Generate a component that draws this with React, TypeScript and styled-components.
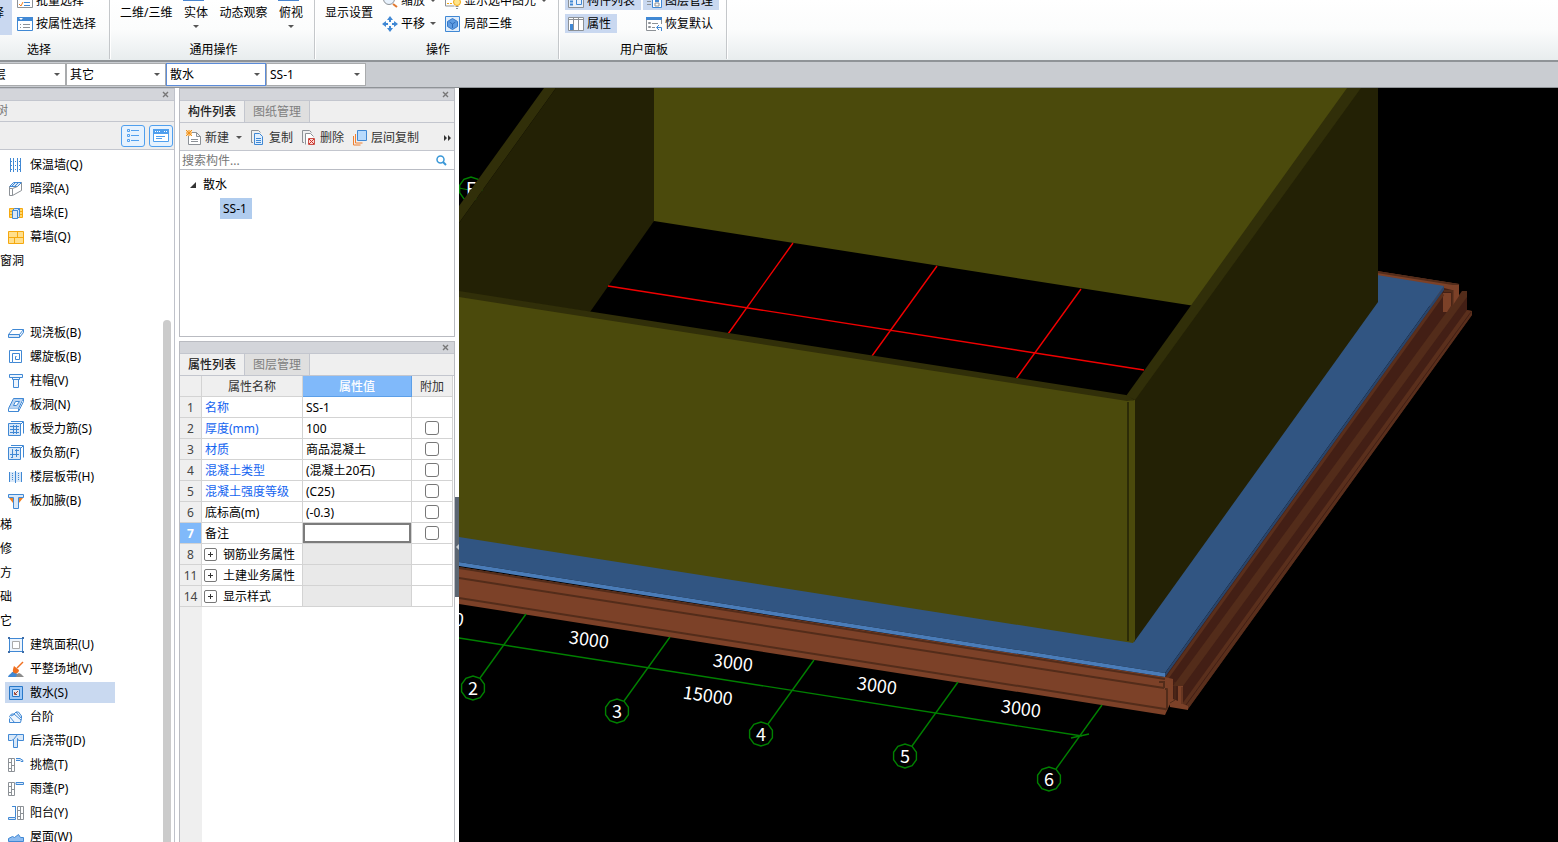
import React from "react";
import styled, { createGlobalStyle, css } from "styled-components";

const GlobalStyle = createGlobalStyle`
  *, *::before, *::after { box-sizing: border-box; }
  html, body, #root { height: 100%; }
  body {
    margin: 0;
    overflow: hidden;
    font-family: "Noto Sans", "Noto Sans CJK SC", sans-serif;
    font-size: 12px;
    line-height: 18px;
    color: #000;
    background: #fff;
  }
  button, select, input {
    font: inherit;
    color: inherit;
    margin: 0;
    padding: 0;
    border: 0;
    border-radius: 0;
    background: none;
  }
`;

/* ---------- frame ---------- */

const Shell = styled.div`
  display: flex;
  flex-direction: column;
  height: 100vh;
  overflow: hidden;
`;

const Ribbon = styled.header`
  display: flex;
  flex: none;
  height: 62px;
  padding-bottom: 1px;
  overflow: hidden;
  background: linear-gradient(#ffffff, #fbfcfc 50%, #e8edee);
  border-bottom: 2px solid #8f9397;
`;

const RibbonGroup = styled.section<{ $width: number; $bleed?: number }>`
  display: flex;
  flex: none;
  flex-direction: column;
  justify-content: space-between;
  width: ${(p) => p.$width}px;
  margin-top: -9px;
  margin-left: ${(p) => -(p.$bleed ?? 0)}px;
  border-right: 1px solid #c4c7ca;
  box-shadow: 1px 0 0 #fff;
`;

const RibbonBody = styled.div<{ $pad: number; $gap: number }>`
  display: flex;
  gap: ${(p) => p.$gap}px;
  padding-left: ${(p) => p.$pad}px;
`;

const RibbonLabel = styled.h2`
  margin: 0;
  padding-left: 3px;
  font-size: 12px;
  font-weight: 400;
  line-height: 18px;
  text-align: center;
`;

const RibbonColumn = styled.div`
  display: flex;
  flex-direction: column;
  align-items: flex-start;
  gap: 4px;
`;

const SmallButton = styled.button<{ $on?: boolean; $menu?: boolean }>`
  display: flex;
  align-items: center;
  gap: 3px;
  height: 19px;
  padding: 0 ${(p) => (p.$menu ? 0 : 6)}px 0 3px;
  white-space: nowrap;
  background: ${(p) => (p.$on ? "#c9d8f0" : "transparent")};
`;

const LargeButton = styled.button<{ $on?: boolean; $end?: boolean }>`
  display: flex;
  flex-direction: column;
  align-items: ${(p) => (p.$end ? "flex-end" : "center")};
  height: 44px;
  padding: 0 ${(p) => (p.$end ? 8 : 0)}px;
  width: ${(p) => (p.$end ? "40px" : "auto")};
  line-height: 24px;
  white-space: nowrap;
  background: ${(p) => (p.$on ? "#c9d8f0" : "transparent")};
`;

const IconCap = styled.span<{ $blue?: boolean }>`
  width: 21px;
  height: 10px;
  margin-right: 4px;
  border-bottom: 1px solid ${(p) => (p.$blue ? "#4a86d0" : "transparent")};
`;

const Arrow = styled.i<{ $space?: number }>`
  flex: none;
  width: 0;
  height: 0;
  margin-left: ${(p) => p.$space ?? 0}px;
  border: 3px solid transparent;
  border-top-color: #555;
  border-bottom: 0;
`;

const FilterBar = styled.nav`
  display: flex;
  flex: none;
  height: 26px;
  padding: 1px 0;
  overflow: hidden;
  background: #c9ccd1;
  border-bottom: 1px solid #8f9397;
`;

const Combo = styled.label<{ $width: number; $bleed?: number; $focus?: boolean }>`
  display: flex;
  flex: none;
  align-items: center;
  width: ${(p) => p.$width}px;
  margin-left: ${(p) => -(p.$bleed ?? 0)}px;
  padding-right: 5px;
  background: #fff;
  border: 1px solid ${(p) => (p.$focus ? "#5b8bd8" : "#a9abad")};

  select {
    flex: 1;
    min-width: 0;
    padding-left: 3px;
    appearance: none;
    outline: 0;
  }
`;

const Workspace = styled.main`
  display: flex;
  flex: 1;
  min-height: 0;
`;

/* ---------- panels ---------- */

const PanelTitle = styled.div`
  display: flex;
  flex: none;
  align-items: center;
  justify-content: flex-end;
  height: 12px;
  padding-right: 4px;
  background: #d3d5da;
  border-bottom: 1px solid #c3c6ce;
`;

const CloseButton = styled.button`
  display: flex;
  width: 9px;
  height: 9px;
`;

const TreePanel = styled.aside`
  display: flex;
  flex: none;
  flex-direction: column;
  width: 175px;
  margin-right: 4px;
  background: #fff;
  border: solid #bfc2ca;
  border-width: 1px 1px 0 0;
`;

const TreeHeading = styled.h2`
  flex: none;
  height: 21px;
  margin: 0 0 0 -4px;
  font-size: 12px;
  font-weight: 400;
  line-height: 20px;
  color: #777;
  background: #eee;
  border-bottom: 1px solid #c3c6ce;
`;

const TreeTools = styled.div`
  display: flex;
  flex: none;
  justify-content: flex-end;
  gap: 4px;
  height: 28px;
  padding: 3px 1px 2px;
  background: #eee;
  border-bottom: 1px solid #c3c6ce;
`;

const ViewButton = styled.button`
  display: flex;
  align-items: center;
  justify-content: center;
  width: 24px;
  height: 22px;
  background: #e6f2fe;
  border: 1px solid #4f9fee;
  border-radius: 3px;
`;

const TreeBody = styled.div`
  display: flex;
  flex: 1;
  min-height: 0;
  overflow: hidden;
`;

const TreeList = styled.ul`
  flex: 1;
  margin: 0;
  padding: 2px 0 0;
  list-style: none;
`;

const TreeGap = styled.li`
  height: 48px;
`;

const TreeGroup = styled.li`
  height: 24px;
  line-height: 25px;
`;

const TreeItem = styled.li`
  height: 24px;
  padding: 2px 0 1px 5px;
`;

const TreeLabel = styled.div<{ $on?: boolean }>`
  display: flex;
  align-items: center;
  gap: 6px;
  width: 110px;
  height: 21px;
  padding-left: 3px;
  white-space: nowrap;
  ${(p) => p.$on && css`background: #c9d9f0;`}
`;

const ScrollTrack = styled.div`
  flex: none;
  width: 11px;
  padding: 170px 3px 0 0;
`;

const ScrollThumb = styled.div`
  height: 100%;
  background: #cbcbcb;
  border-radius: 4px 4px 0 0;
`;

const SideColumn = styled.div`
  display: flex;
  flex: none;
  flex-direction: column;
  gap: 4px;
  width: 276px;
`;

const Panel = styled.section<{ $grow?: boolean }>`
  display: flex;
  flex: ${(p) => (p.$grow ? "1" : "none")};
  flex-direction: column;
  min-height: 0;
  background: #fff;
  border: 1px solid #b9bbc1;
  border-bottom-width: ${(p) => (p.$grow ? 0 : 1)}px;
`;

const Tabs = styled.div`
  display: flex;
  flex: none;
  height: 22px;
  background: #efefef;
  border-bottom: 1px solid #c3c6ce;
`;

const Tab = styled.button<{ $on?: boolean }>`
  width: 65px;
  color: ${(p) => (p.$on ? "#222" : "#808080")};
  font-weight: ${(p) => (p.$on ? 500 : 400)};
  background: ${(p) => (p.$on ? "#efefef" : "#dfdfdf")};
  border-right: 1px solid #c3c6ce;
`;

const Toolbar = styled.div`
  display: flex;
  flex: none;
  align-items: center;
  gap: 8px;
  height: 28px;
  padding: 2px 2px 0 6px;
  color: #333;
  background: #efefef;
  border-bottom: 1px solid #c3c6ce;
`;

const ToolButton = styled.button`
  display: flex;
  align-items: center;
  gap: 3px;
  white-space: nowrap;

  &:last-child { margin-left: auto; }
`;

const SearchRow = styled.label`
  display: flex;
  flex: none;
  align-items: center;
  height: 19px;
  padding: 1px 7px 0 2px;
  border-bottom: 1px solid #b9bcc4;

  input { flex: 1; min-width: 0; outline: 0; }
  input::placeholder { color: #777; opacity: 1; }
`;

const ComponentTree = styled.ul`
  height: 166px;
  margin: 0;
  padding: 3px 0 0 8px;
  line-height: 24px;
  list-style: none;

  ul { margin: 0; padding: 0 0 0 32px; list-style: none; }
`;

const Branch = styled.div`
  display: flex;
  align-items: center;
  gap: 5px;
`;

const Leaf = styled.span`
  display: inline-block;
  padding: 0 5px 0 3px;
  line-height: 21px;
  background: #b0ccee;
`;

/* ---------- property table ---------- */

const TableArea = styled.div`
  flex: 1;
  min-height: 0;
  overflow: hidden;
  background: linear-gradient(90deg, #efefef 22px, #fff 22px);
`;

const PropertyTable = styled.table`
  width: 273px;
  table-layout: fixed;
  border-collapse: separate;
  border-spacing: 0;

  th, td {
    height: 21px;
    padding: 1px 3px 0;
    overflow: hidden;
    line-height: 18px;
    font-weight: 400;
    text-align: left;
    white-space: nowrap;
    background: #fff;
    border: solid #d3d3d3;
    border-width: 0 1px 1px 0;
  }
`;

const ColumnHead = styled.th<{ $on?: boolean }>`
  && {
    text-align: center;
    color: ${(p) => (p.$on ? "#fff" : "#333")};
    font-weight: ${(p) => (p.$on ? 500 : 400)};
    background: ${(p) => (p.$on ? "#80b9fa" : "#efefef")};
    ${(p) => p.$on && css`border-color: #5c9fe8;`}
  }
`;

const RowHead = styled.th<{ $on?: boolean }>`
  && {
    padding: 1px 0 0;
    text-align: center;
    color: ${(p) => (p.$on ? "#fff" : "#444")};
    font-weight: ${(p) => (p.$on ? 700 : 400)};
    background: ${(p) => (p.$on ? "#80b9fa" : "#efefef")};
  }
`;

const NameCell = styled.td<{ $link?: boolean }>`
  color: ${(p) => (p.$link ? "#1464f0" : "#000")};
`;

const GroupName = styled.span`
  display: flex;
  align-items: center;
  gap: 6px;
`;

const Expander = styled.button`
  display: flex;
  align-items: center;
  justify-content: center;
  width: 13px;
  height: 13px;
  margin-left: -1px;
  border: 1px solid #777;
  border-radius: 2px;
`;

const ValueCell = styled.td<{ $state?: "muted" | "editing" }>`
  && {
    ${(p) => p.$state === "muted" && css`background: #e9e9e9;`}
    ${(p) => p.$state === "editing" && css`padding: 0;`}
  }
`;

const ValueInput = styled.input`
  display: block;
  width: 100%;
  height: 20px;
  outline: 2px solid #7c7c7c;
  outline-offset: -2px;
`;

const CheckCell = styled.td`
  && { padding: 0; text-align: center; }

  input {
    display: block;
    width: 14px;
    height: 14px;
    margin: 0 auto;
    appearance: none;
    border: 1px solid #777;
    border-radius: 3px;
  }
`;

/* ---------- viewport ---------- */

const Splitter = styled.div`
  display: flex;
  flex: none;
  flex-direction: column;
  align-items: center;
  width: 4px;
  padding-top: 409px;
  background: #fff;
`;

const SplitHandle = styled.button`
  display: flex;
  align-items: center;
  width: 4px;
  height: 100px;
  background: #5c6672;
`;

const Viewport = styled.div`
  flex: 1;
  min-width: 0;
  background: #000;

  svg { display: block; width: 100%; height: 100%; }
  text {
    font-family: "Noto Sans CJK SC", "Noto Sans", sans-serif;
    font-size: 18px;
    fill: #fff;
    text-anchor: middle;
  }
`;

/* ---------- icons ---------- */

const B = "#4088d4";
const G = "#8c9196";
const L = "#d9e8f8";
const Y = "#f5a80f";

const glyphs: Record<string, React.ReactNode> = {
  insulation: <><path d="M2.5 1v14M5.5 1v14M9.5 1v14M12.5 1v14" stroke={B} /><path d="M3 4.5h10M3 8.5h10M3 12.5h10" stroke={B} strokeDasharray="1 1" /></>,
  beam: <><path d="M1.500 5.500l4-4h8l-4 4z" fill={L} stroke={B} /><path d="M3.500 5.500l4-4M6.500 5.500l4-4" stroke={B} /><path d="M1.500 5.500v9h3v-7h-3M4.500 14.500l9-5v-8M4.500 7.500l5-2" stroke={G} /></>,
  pier: <><path d="M1.500 3.500h13v9h-13zM1.500 6.500h13M1.500 9.500h13" fill="#ffd76a" stroke={Y} /><path d="M4.500 5.500l2-2h5v8l-2 2h-5zM4.500 5.500h5v8M9.500 5.500l2-2" fill={L} stroke={B} /></>,
  curtain: <path d="M.5 2.500h15v12H.5zM.5 8.500h15M9.500 2.500v6M6.500 8.500v6" fill="#ffdf8c" stroke={Y} />,
  slab: <><path d="M4.500 4.500h11l-4 5H.5z" fill="#fff" stroke={B} /><path d="M.5 9.500v3h11v-3zM11.500 12.500l4-5v-3" fill={L} stroke={B} /></>,
  spiral: <path d="M4.500 13.500v-9h7v6h-4v-3h1M4.500 13.500h9v-12h-12v12z" stroke={B} />,
  cap: <path d="M1.500 1.500h13v3h-3v2h-7v-2h-3zM5.500 6.500v8h5v-8M4 4.500h8" fill="#eef5fd" stroke={B} />,
  hole: <><path d="M5.500 1.500h10l-5 10H.5z" fill="#b8d3f2" stroke={B} /><path d="M.5 11.500v3h10v-3M10.500 14.500l5-10v-3M7.500 4.500h4l-3 4h-3z" fill="#fff" stroke={B} /></>,
  rebarS: <><path d="M3 .500h12.500v12M13 3l2-2" stroke={B} /><path d="M.5 2.500h12v12H.5z" fill={L} stroke={B} /><path d="M2 5.500h9M2 8.500h9M2 11.500h9M5.500 4v9M8.500 4v9" stroke={B} /></>,
  rebarF: <><path d="M3 .500h12.500v12M13 3l2-2" stroke={B} /><path d="M.5 2.500h12v12H.5z" fill={L} stroke={B} /><path d="M4.500 4v8M8.500 4v8M2 9.500h9M3 12.500h2M7 5.500h4" stroke={B} /></>,
  band: <><path d="M2 3h12v10H2z" fill={L} /><path d="M1.500 3v10M7.500 2v12M13.500 3v10" stroke={B} /><path d="M4.500 4v8M10.500 4v8" stroke={B} strokeDasharray="1 1" /></>,
  haunch: <><path d="M.5 1.500h15v3h-5v11h-5v-11h-5z" fill={L} stroke={B} /><path d="M1 5l4 5V5zM15 5l-4 5V5z" fill="#f58220" /></>,
  area: <><path d="M1.500 1.500h13v13h-13z" fill="#eef5fd" stroke={B} /><path d="M4.500 4.500h7v7h-7z" fill="#fff" stroke="#aaa" /><path d="M0 0h2v2H0zM14 0h2v2h-2zM0 14h2v2H0zM14 14h2v2h-2z" fill="#3c6ca8" /></>,
  level: <><path d="M0 16c1-3 3-3 4-5h4l2 5z" fill={B} /><path d="M8 16l1-3 2-1 2 1 3 3z" fill="#8c8c8c" /><path d="M9 7l6-6" stroke="#f07020" strokeWidth="1.500" /><path d="M6 5l5 4c0 3-3 4-5 3s-1-4 0-7z" fill="#f07020" /></>,
  apron: <><path d="M1.500 1.500h13v13h-13z" fill="#9cc8f8" stroke="#2878c8" /><path d="M4.500 4.500h7v7h-7z" fill="#e0e8f4" stroke="#2878c8" /><path d="M10 6l-3 3M6.500 7v2.500H9" stroke="#a04838" /></>,
  steps: <path d="M1.500 9.500v4h11l1-4V7l-3-4H8L6 5H3.500L1.500 7.500l5 6M6 5l7 6M8 3l5 6M3 7l3-1.500" fill="#eef5fd" stroke={B} />,
  strip: <path d="M.5 1.500h15v6h-5l-1-2v9h-4v-8l-2 1h-3zM5.500 6.500l4-5" fill={L} stroke={B} />,
  eave: <><path d="M.5 1.500h6v13h-6zM3.500 1.500v13M.5 5.500h3M3.500 8.500h3M.5 11.500h3" stroke={G} /><path d="M8 1.500h4l3 2v1h-2l-1-1H8" fill={L} stroke={B} /></>,
  canopy: <><path d="M.5 1.500h6v13h-6zM3.500 1.500v13M.5 5.500h3M3.500 8.500h3M.5 11.500h3" stroke={G} /><path d="M8 1.500h7.500v2H8z" fill={L} stroke={B} /></>,
  balcony: <><path d="M9.500 1.500h6v13h-6zM12.500 1.500v13M9.500 5.500h3M12.500 8.500h3M9.500 11.500h3" stroke={G} /><path d="M4 1.500h4M7.500 2v10M.5 12.500h7v2h-7z" fill={L} stroke={B} /></>,
  roof: <path d="M.5 12.500v-3l4-2 2 1 4-3 2 3h3v4z" fill="#8ebcf0" stroke={B} />,
  batch: <><path d="M.5-.5h15v15H.5z" fill="#fff" stroke={G} /><path d="M7 9.500h6M7 12.500h6" stroke={B} /><path d="M2 11l2 2 2-4" stroke="#f08020" /></>,
  props: <><path d="M.5 1.500h15v13H.5z" fill="#fff" stroke={B} /><path d="M0 1h16v4H0z" fill={B} /><path d="M2 2h4l-2 2z" fill="#fff" /><path d="M3 8.500h1M6 8.500h7M3 11.500h1M6 11.500h7" stroke={G} /></>,
  zoom: <><circle cx="7" cy="6" r="5.500" fill="#e8f2fd" stroke={G} /><path d="M11 11l4 3" stroke="#e07830" strokeWidth="2" /></>,
  pan: <><path d="M8 0l3 4H5zM8 16l3-4H5zM0 8l4-3v6zM16 8l-4-3v6z" fill={B} /><path d="M8 3v3M8 10v3M3 8h3M10 8h3" stroke={B} strokeWidth="2" /></>,
  bulb: <><path d="M.5 3v10h9" stroke={G} /><path d="M2 10.500h6" stroke={Y} strokeDasharray="2 1" /><circle cx="12" cy="9" r="3.500" fill="#ffe48a" stroke={Y} /><path d="M10.500 13.500h3M11 15.500h2" stroke={G} /></>,
  local3d: <><path d="M.5.5h14v15H.5z" fill="#e0edfb" stroke={B} /><path d="M7.500 2.500l5 3v5l-5 3-5-3v-5z" fill="#5e9ce2" stroke="#3478c8" /><path d="M4.500 6l3 2 3-2M7.500 8v4" stroke="#2f6cb8" /></>,
  list: <><path d="M.5.500h15v14H.5z" fill="#e8f0fa" stroke={G} /><path d="M2 8.500h3M2 11.500h3" stroke={B} strokeWidth="2" /><path d="M8.500 6.500h5v5h-5z" stroke={B} /></>,
  layers: <><path d="M6.500.500h9v14h-9z" fill="#fff" stroke={B} /><path d="M1 8.500h4M1 11.500h4M9 10h4v3H9z" stroke={G} /><path d="M9 6h4v3H9z" fill={B} /></>,
  panelProps: <><path d="M.5 1.500h15v13H.5z" fill="#fff" stroke={G} /><path d="M1 3.500h14M5.500 2v12M10.500 2v12" stroke={G} /><path d="M2 8h3v6H2z" fill={B} /></>,
  restore: <><path d="M15.500 8V1.500H.5v13H10" fill="#fff" stroke={G} /><path d="M0 1h16v3H0z" fill={B} /><path d="M2.500 6.500h2v1h-2zM2.500 10.500h2v1h-2zM6 7.500h6M6 11.500h3" stroke={G} /><path d="M15.500 15v-3.500H11M13 9l-2.500 2.500L13 14" stroke={B} /></>,
  create: <><path d="M3.500 2.500h7l4 4v8h-12v-9zM10.500 2.500v4h4M5 9.500h7M5 11.500h7" fill="#fff" stroke={G} /><path d="M0 0h6v6H0z" fill="#fbe0b8" /><path d="M0 0l6 6M6 0L0 6M3 0v6M0 3h6" stroke="#f09018" /></>,
  copy: <><path d="M3 12.500H1.500V.500h7l2 2" stroke={G} /><path d="M4.500 3.500h5l3 3v8h-8z" fill="#e0effe" stroke={B} /><path d="M6 8.500h5M6 10.500h5M6 12.500h5" stroke={B} /></>,
  remove: <><path d="M3 12.500H1.500V.500h7l2 2" stroke={G} /><path d="M4.500 14.500v-11h5l3 3" fill="#fff" stroke={G} /><path d="M7.500 8.500h6v6h-6z" fill="#fbd8d4" stroke="#c85048" /><path d="M8 9l5 5M13 9l-5 5" stroke="#d03028" /></>,
  between: <><path d="M1.500 6v9h7M3.500 4v9h7" stroke="#f08030" /><path d="M5.500.500h9v10h-9z" fill="#b8dafc" stroke={B} /></>,
  viewList: <><path d="M2.500 1.500h2v2h-2zM2.500 6.500h2v2h-2zM2.500 11.500h2v2h-2z" stroke="#4f9fee" /><path d="M6 2.500h8M6 7.500h8M6 12.500h8" stroke="#4f9fee" /></>,
  viewCard: <><path d="M.5 1.500h15v12H.5z" fill="#fff" stroke="#4f9fee" /><path d="M0 1h16v5H0z" fill="#4f9fee" /><path d="M2 3.500h6M11 3.500h3" stroke="#fff" strokeDasharray="1 1" /><path d="M3 8.500h9M3 10.500h6" stroke="#4f9fee" /></>,
};

const Glyph = styled.svg`
  flex: none;
  width: 16px;
  height: 16px;
`;

const Icon = ({ name }: { name: string }) => (
  <Glyph viewBox="0 0 16 16" fill="none" aria-hidden="true">{glyphs[name]}</Glyph>
);

const TinyGlyph = styled.svg<{ $w: number; $h: number }>`
  display: block;
  flex: none;
  width: ${(p) => p.$w}px;
  height: ${(p) => p.$h}px;
`;

const Close = () => (
  <CloseButton aria-label="关闭">
    <TinyGlyph $w={9} $h={9} viewBox="0 0 9 9" fill="none">
      <path d="M2 2l5 5M7 2L2 7" stroke="#777" strokeWidth="1.400" />
    </TinyGlyph>
  </CloseButton>
);

/* ---------- data ---------- */

type Node = { icon: string; text: string; on?: boolean } | { group: string } | { gap: true };

const treeNodes: Node[] = [
  { icon: "insulation", text: "保温墙(Q)" },
  { icon: "beam", text: "暗梁(A)" },
  { icon: "pier", text: "墙垛(E)" },
  { icon: "curtain", text: "幕墙(Q)" },
  { group: "窗洞" },
  { gap: true },
  { icon: "slab", text: "现浇板(B)" },
  { icon: "spiral", text: "螺旋板(B)" },
  { icon: "cap", text: "柱帽(V)" },
  { icon: "hole", text: "板洞(N)" },
  { icon: "rebarS", text: "板受力筋(S)" },
  { icon: "rebarF", text: "板负筋(F)" },
  { icon: "band", text: "楼层板带(H)" },
  { icon: "haunch", text: "板加腋(B)" },
  { group: "梯" },
  { group: "修" },
  { group: "方" },
  { group: "础" },
  { group: "它" },
  { icon: "area", text: "建筑面积(U)" },
  { icon: "level", text: "平整场地(V)" },
  { icon: "apron", text: "散水(S)", on: true },
  { icon: "steps", text: "台阶" },
  { icon: "strip", text: "后浇带(JD)" },
  { icon: "eave", text: "挑檐(T)" },
  { icon: "canopy", text: "雨蓬(P)" },
  { icon: "balcony", text: "阳台(Y)" },
  { icon: "roof", text: "屋面(W)" },
];

type Row = { id: number; name: string; value?: string; link?: boolean; kind?: "group" | "editing"; noCheck?: boolean };

const rows: Row[] = [
  { id: 1, name: "名称", value: "SS-1", link: true, noCheck: true },
  { id: 2, name: "厚度(mm)", value: "100", link: true },
  { id: 3, name: "材质", value: "商品混凝土", link: true },
  { id: 4, name: "混凝土类型", value: "(混凝土20石)", link: true },
  { id: 5, name: "混凝土强度等级", value: "(C25)", link: true },
  { id: 6, name: "底标高(m)", value: "(-0.3)" },
  { id: 7, name: "备注", kind: "editing" },
  { id: 8, name: "钢筋业务属性", kind: "group" },
  { id: 11, name: "土建业务属性", kind: "group" },
  { id: 14, name: "显示样式", kind: "group" },
];

const axes = [
  { label: "2", x: 473, y: 688 },
  { label: "3", x: 617, y: 711 },
  { label: "4", x: 761, y: 734 },
  { label: "5", x: 905, y: 756 },
  { label: "6", x: 1049, y: 779 },
];

const dimensions = [
  { text: "0", x: 459, y: 619 },
  { text: "3000", x: 589, y: 639 },
  { text: "3000", x: 733, y: 662 },
  { text: "3000", x: 877, y: 685 },
  { text: "3000", x: 1021, y: 708 },
  { text: "15000", x: 708, y: 695 },
];

const bubble = (cx: number, cy: number) =>
  Array.from({ length: 10 }, (_, i) => {
    const a = (i * Math.PI) / 5 + Math.PI / 2;
    return `${(cx + 12 * Math.cos(a)).toFixed(1)},${(cy + 12 * Math.sin(a)).toFixed(1)}`;
  }).join(" ");

const Scene = () => (
  <svg viewBox="459 88 1099 754" preserveAspectRatio="xMinYMin slice" role="img" aria-label="三维视图">
    <polygon points={bubble(471, 189)} fill="none" stroke="#008000" strokeWidth="1.400" />
    <path d="M459 188l10 2" stroke="#008000" />
    <text x="471" y="196">F</text>

    {/* far brick edge and apron surface */}
    <polygon points="1377,271 1459,284 1459,298 1450,312 1377,290" fill="#7c4128" />
    <path d="M1377 272l82 13" stroke="#532c1a" strokeWidth="2" />
    <polygon points="1444,288 1452,290 1456,304 1463,292 1467,291 1467,310 1472,311 1472,315 1188,709 1165,704 1165,675" fill="#431f15" />
    <polygon points="1462,291 1467,291 1467,297 1183,686 1173,686" fill="#532c1a" />
    <polygon points="1467,310 1472,311 1472,315 1188,709 1182,704" fill="#5a2f1c" />
    <path d="M1471 312L1186 705" stroke="#431f15" />
    <polygon points="1452,285 1459,285 1459,296 1453,305" fill="#7c4128" />
    <path d="M1444 291h8.500v14" fill="none" stroke="#532c1a" strokeWidth="2" />
    <polygon points="1443,293 1451,293 1451,306 1447,312 1443,312" fill="#7c4128" />
    <path d="M1443 294L1167 678" stroke="#5a2f1c" strokeWidth="3" />
    <polygon points="1377,275 1444,286 1165,673 459,562 459,500 1100,600 1377,300" fill="#315582" />
    <polygon points="1444,286 1444,290 1165,677 1165,673" fill="#29456c" />

    {/* front brick course */}
    <polygon points="459,567 1165,677 1173,679 1173,698 1170,704 1165,715 459,604" fill="#7c4128" />
    <path d="M459 568L1165 679M459 578L1164 688M459 598L1165 709" fill="none" stroke="#532c1a" strokeWidth="2" />
    <path d="M1159 682h5v6M1165 689h2v19l-2 2" fill="none" stroke="#532c1a" strokeWidth="2" />
    <polygon points="1172,680 1173,699 1178,701 1178,686 1183,686 1183,704 1188,706 1188,710 1170,707 1168,690 1166,681" fill="#7c4128" />
    <path d="M1175 682v18l-5 3M1182 687v17" fill="none" stroke="#532c1a" />
    <polygon points="459,562 1165,673 1165,677 459,566" fill="#4a7cb8" />

    {/* walls */}
    <polygon points="544,88 556,88 459,223 459,206" fill="#312f09" />
    <polygon points="556,88 655,88 654,221 590,312 459,292 459,223" fill="#232105" />
    <polygon points="654,88 1355,88 1195,306 654,221" fill="#4b4a0c" />
    <path d="M608 286l536 84M793 243l-65 91M937 266l-65 90M1081 289l-65 90" stroke="#f00000" strokeWidth="1.400" />
    <polygon points="1355,88 1378,88 1378,302 1134,642 1134,392" fill="#232105" />
    <polygon points="1347,88 1361,88 1135,400 1126,396" fill="#312f09" />
    <polygon points="459,291 1126,395 1135,400 1127,402 459,298" fill="#312f09" />
    <polygon points="459,297 1127,401 1135,400 1135,640 1133,643 459,537" fill="#4b4a0c" />
    <path d="M1128 402v239" stroke="#2c2b07" strokeWidth="2" />

    {/* axis grid */}
    <path d="M459 638L1082 736M1071 738l18-4" stroke="#008000" strokeWidth="1.400" />
    {axes.map((a) => (
      <g key={a.label}>
        <path d={`M${a.x + 7} ${a.y - 10}l46-64`} stroke="#008000" strokeWidth="1.400" />
        <polygon points={bubble(a.x, a.y)} fill="none" stroke="#008000" strokeWidth="1.400" />
        <text x={a.x} y={a.y + 7}>{a.label}</text>
      </g>
    ))}
    {dimensions.map((d) => (
      <text key={d.x} x={d.x} y={d.y + 7} transform={`rotate(8 ${d.x} ${d.y})`}>{d.text}</text>
    ))}
  </svg>
);

/* ---------- page ---------- */

const Small = ({ icon, children, on, arrow }: { icon: string; children: string; on?: boolean; arrow?: boolean }) => (
  <SmallButton $on={on} $menu={arrow}>
    <Icon name={icon} />
    {children}
    {arrow && <Arrow $space={2} />}
  </SmallButton>
);

const Large = ({ children, arrow }: { children: string; arrow?: boolean }) => (
  <LargeButton>
    <IconCap $blue={arrow} />
    {children}
    {arrow && <Arrow />}
  </LargeButton>
);

export default function App() {
  return (
    <Shell>
      <GlobalStyle />
      <Ribbon>
        <RibbonGroup $width={144} $bleed={34}>
          <RibbonBody $pad={6} $gap={2}>
            <LargeButton $on $end><IconCap />择</LargeButton>
            <RibbonColumn>
              <Small icon="batch">批量选择</Small>
              <Small icon="props">按属性选择</Small>
            </RibbonColumn>
          </RibbonBody>
          <RibbonLabel>选择</RibbonLabel>
        </RibbonGroup>
        <RibbonGroup $width={205}>
          <RibbonBody $pad={10} $gap={11}>
            <Large>二维/三维</Large>
            <Large arrow>实体</Large>
            <Large>动态观察</Large>
            <Large arrow>俯视</Large>
          </RibbonBody>
          <RibbonLabel>通用操作</RibbonLabel>
        </RibbonGroup>
        <RibbonGroup $width={244}>
          <RibbonBody $pad={10} $gap={6}>
            <Large>显示设置</Large>
            <RibbonColumn>
              <Small icon="zoom" arrow>缩放</Small>
              <Small icon="pan" arrow>平移</Small>
            </RibbonColumn>
            <RibbonColumn>
              <Small icon="bulb" arrow>显示选中图元</Small>
              <Small icon="local3d">局部三维</Small>
            </RibbonColumn>
          </RibbonBody>
          <RibbonLabel>操作</RibbonLabel>
        </RibbonGroup>
        <RibbonGroup $width={168}>
          <RibbonBody $pad={6} $gap={2}>
            <RibbonColumn>
              <Small icon="list" on>构件列表</Small>
              <Small icon="panelProps" on>属性</Small>
            </RibbonColumn>
            <RibbonColumn>
              <Small icon="layers" on>图层管理</Small>
              <Small icon="restore">恢复默认</Small>
            </RibbonColumn>
          </RibbonBody>
          <RibbonLabel>用户面板</RibbonLabel>
        </RibbonGroup>
      </Ribbon>

      <FilterBar>
        <Combo $width={76} $bleed={10}><select aria-label="楼层"><option>层</option></select><Arrow /></Combo>
        <Combo $width={100}><select aria-label="分类"><option>其它</option></select><Arrow /></Combo>
        <Combo $width={100} $focus><select aria-label="构件类型"><option>散水</option></select><Arrow /></Combo>
        <Combo $width={100}><select aria-label="构件"><option>SS-1</option></select><Arrow /></Combo>
      </FilterBar>

      <Workspace>
        <TreePanel>
          <PanelTitle><Close /></PanelTitle>
          <TreeHeading>树</TreeHeading>
          <TreeTools>
            <ViewButton aria-label="列表视图"><Icon name="viewList" /></ViewButton>
            <ViewButton aria-label="卡片视图"><Icon name="viewCard" /></ViewButton>
          </TreeTools>
          <TreeBody>
            <TreeList>
              {treeNodes.map((n, i) =>
                "gap" in n ? <TreeGap key={i} aria-hidden="true" />
                  : "group" in n ? <TreeGroup key={i}>{n.group}</TreeGroup>
                  : <TreeItem key={i}><TreeLabel $on={n.on}><Icon name={n.icon} />{n.text}</TreeLabel></TreeItem>
              )}
            </TreeList>
            <ScrollTrack><ScrollThumb /></ScrollTrack>
          </TreeBody>
        </TreePanel>

        <SideColumn>
          <Panel>
            <PanelTitle><Close /></PanelTitle>
            <Tabs>
              <Tab $on>构件列表</Tab>
              <Tab>图纸管理</Tab>
            </Tabs>
            <Toolbar>
              <ToolButton><Icon name="create" />新建<Arrow $space={4} /></ToolButton>
              <ToolButton><Icon name="copy" />复制</ToolButton>
              <ToolButton><Icon name="remove" />删除</ToolButton>
              <ToolButton><Icon name="between" />层间复制</ToolButton>
              <ToolButton aria-label="更多">
                <TinyGlyph $w={9} $h={6} viewBox="0 0 9 6" fill="#333"><path d="M1 0l3 3-3 3zM5 0l3 3-3 3z" /></TinyGlyph>
              </ToolButton>
            </Toolbar>
            <SearchRow>
              <input type="text" placeholder="搜索构件..." aria-label="搜索构件" />
              <TinyGlyph $w={11} $h={11} viewBox="0 0 11 11" fill="none" stroke="#3a98d8">
                <circle cx="4.500" cy="4.500" r="3.500" strokeWidth="1.500" />
                <path d="M7 7l3 3" strokeWidth="2" />
              </TinyGlyph>
            </SearchRow>
            <ComponentTree>
              <li>
                <Branch>
                  <TinyGlyph $w={10} $h={8} viewBox="0 0 10 8"><path d="M8 1v6H2z" fill="#333" /></TinyGlyph>
                  散水
                </Branch>
                <ul><li><Leaf>SS-1</Leaf></li></ul>
              </li>
            </ComponentTree>
          </Panel>

          <Panel $grow>
            <PanelTitle><Close /></PanelTitle>
            <Tabs>
              <Tab $on>属性列表</Tab>
              <Tab>图层管理</Tab>
            </Tabs>
            <TableArea>
              <PropertyTable>
                <colgroup>
                  <col width={22} /><col width={101} /><col width={109} /><col width={41} />
                </colgroup>
                <thead>
                  <tr>
                    <ColumnHead aria-label="序号" />
                    <ColumnHead>属性名称</ColumnHead>
                    <ColumnHead $on>属性值</ColumnHead>
                    <ColumnHead>附加</ColumnHead>
                  </tr>
                </thead>
                <tbody>
                  {rows.map((r) => (
                    <tr key={r.id}>
                      <RowHead $on={r.kind === "editing"}>{r.id}</RowHead>
                      <NameCell $link={r.link}>
                        {r.kind === "group" ? (
                          <GroupName>
                            <Expander aria-label={`展开${r.name}`}>
                              <TinyGlyph $w={5} $h={5} viewBox="0 0 5 5"><path d="M2 0h1v2h2v1H3v2H2V3H0V2h2z" fill="#333" /></TinyGlyph>
                            </Expander>
                            {r.name}
                          </GroupName>
                        ) : r.name}
                      </NameCell>
                      {r.kind === "editing"
                        ? <ValueCell $state="editing"><ValueInput type="text" aria-label={r.name} /></ValueCell>
                        : <ValueCell $state={r.kind === "group" ? "muted" : undefined}>{r.value}</ValueCell>}
                      <CheckCell>
                        {!r.noCheck && r.kind !== "group" && <input type="checkbox" aria-label={`附加 ${r.name}`} />}
                      </CheckCell>
                    </tr>
                  ))}
                </tbody>
              </PropertyTable>
            </TableArea>
          </Panel>
        </SideColumn>

        <Splitter>
          <SplitHandle aria-label="折叠面板">
            <TinyGlyph $w={4} $h={6} viewBox="0 0 4 6"><path d="M4 0v6L1 3z" fill="#c8ccd0" /></TinyGlyph>
          </SplitHandle>
        </Splitter>
        <Viewport><Scene /></Viewport>
      </Workspace>
    </Shell>
  );
}
